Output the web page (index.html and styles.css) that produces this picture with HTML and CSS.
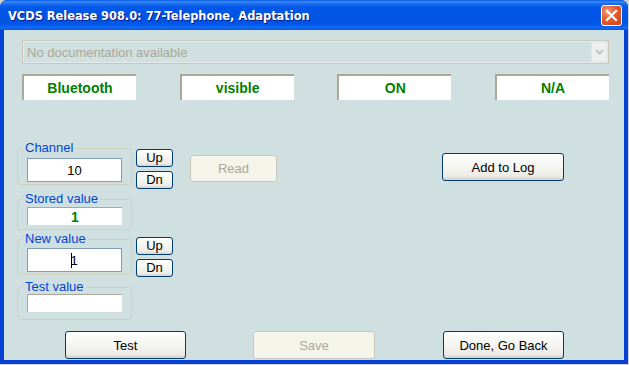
FILE: index.html
```html
<!DOCTYPE html>
<html>
<head>
<meta charset="utf-8">
<link rel="stylesheet" href="styles.css">
</head>
<body>
<div class="window">
  <div class="titlebar">
    <span class="title">VCDS Release 908.0: 77-Telephone, Adaptation</span>
    <span class="close">
      <svg width="13" height="13" viewBox="0 0 13 13"><path d="M2 2 L11 11 M11 2 L2 11" stroke="#fff" stroke-width="2.2" stroke-linecap="square"/></svg>
    </span>
  </div>
  <div class="client">
    <div class="combo">
      <span class="combo-text">No documentation available</span>
      <span class="combo-btn">
        <svg width="9" height="6" viewBox="0 0 9 6"><path d="M1 1 L4.5 4.5 L8 1" fill="none" stroke="#c3c7cb" stroke-width="2"/></svg>
      </span>
    </div>
    <div class="status">
      <div class="sbox">Bluetooth</div>
      <div class="sbox">visible</div>
      <div class="sbox">ON</div>
      <div class="sbox">N/A</div>
    </div>
    <div class="main">
      <div class="leftcol">
        <div class="grow">
          <fieldset class="grp g-channel"><legend>Channel</legend><div class="edit">10</div></fieldset>
          <div class="updn up1"><button class="btn small">Up</button><button class="btn small">Dn</button></div>
        </div>
        <fieldset class="grp g-stored"><legend>Stored value</legend><div class="ro green">1</div></fieldset>
        <div class="grow">
          <fieldset class="grp g-new"><legend>New value</legend><div class="edit"><span class="caret"></span>1</div></fieldset>
          <div class="updn up2"><button class="btn small">Up</button><button class="btn small">Dn</button></div>
        </div>
        <fieldset class="grp g-test"><legend>Test value</legend><div class="ro"></div></fieldset>
      </div>
      <button class="btn dis read">Read</button>
      <button class="btn addlog">Add to Log</button>
    </div>
    <div class="bottom">
      <button class="btn b-test">Test</button>
      <button class="btn dis b-save">Save</button>
      <button class="btn b-done">Done, Go Back</button>
    </div>
  </div>
</div>
</body>
</html>
```

FILE: styles.css
```css
* { box-sizing: border-box; }
html, body { margin: 0; padding: 0; }
body {
  width: 629px;
  height: 365px;
  background: #d6d3ce;
  font-family: "Liberation Sans", Arial, sans-serif;
  font-size: 13px;
  overflow: hidden;
}
.window {
  width: 628px;
  height: 364px;
  display: flex;
  flex-direction: column;
  border-radius: 7px 7px 0 0;
  overflow: hidden;
  background: #0842d4;
}
.titlebar {
  height: 30px;
  flex: none;
  display: flex;
  align-items: center;
  padding: 0 6px 0 8px;
  background: linear-gradient(to bottom, #0a5ce6 0%, #3b8cf6 7%, #1c6cf0 12%, #0058e9 25%, #0054e3 55%, #0055e6 78%, #0a64f2 88%, #1569f0 94%, #0a55e0 100%);
}
.title {
  color: #fff;
  font-family: "DejaVu Sans", sans-serif;
  font-weight: bold;
  font-size: 11.4px;
  text-shadow: 1px 1px 0 #0a1e8c;
  flex: 1;
  padding-top: 1px;
}
.close {
  width: 21px;
  height: 21px;
  border: 1px solid #fff;
  border-radius: 3px;
  background: radial-gradient(circle at 30% 30%, #f09a7c 0%, #e35b2f 45%, #c9431c 100%);
  display: flex;
  align-items: center;
  justify-content: center;
  margin-top: 1px;
}
.client {
  flex: 1;
  margin: 0 4px 4px 4px;
  background: #d0dfdf;
  display: flex;
  flex-direction: column;
  padding: 10px 15px 0 18px;
}
.combo {
  height: 24px;
  display: flex;
  align-items: center;
  border: 1px solid #c9c7ba;
  box-shadow: inset 0 0 0 1px #e4ebea;
  padding: 0 1px 0 4px;
}
.combo-text {
  flex: 1;
  color: #aca899;
  font-size: 13px;
}
.combo-btn {
  width: 16px;
  height: 20px;
  background: #eef0ef;
  border: 1px solid #e2e6e4;
  border-radius: 2px;
  display: flex;
  align-items: center;
  justify-content: center;
}
.status {
  margin-top: 10px;
  display: flex;
  justify-content: space-between;
}
.sbox {
  width: 114px;
  height: 26px;
  background: #fff;
  border-top: 2px solid #aca899;
  border-left: 2px solid #aca899;
  color: #008000;
  font-weight: bold;
  font-size: 14px;
  display: flex;
  align-items: center;
  justify-content: center;
}
.main {
  margin-top: 41px;
  margin-left: -5px;
  display: flex;
  align-items: flex-start;
}
.leftcol {
  display: flex;
  flex-direction: column;
}
.grow {
  display: flex;
  align-items: flex-start;
}
.grp {
  width: 115px;
  margin: 0;
  padding: 3px 8px 2px 9px;
  min-width: 0;
  border: 1px solid #d0d0bf;
  border-radius: 4px;
}
.grp legend {
  padding: 0 2px;
  margin-left: -4px;
  color: #0046d5;
  font-size: 13px;
  line-height: 14px;
}
.g-stored { margin-top: 3px; padding-top: 1px; padding-bottom: 4px; }
.g-new { margin-top: 2px; padding-top: 2px; }
.g-test { margin-top: 3px; padding-top: 0px; padding-bottom: 7px; }
.edit {
  width: 95px;
  height: 24px;
  background: #fff;
  border: 1px solid #7f9db9;
  display: flex;
  align-items: center;
  justify-content: center;
  color: #000;
  font-size: 13px;
}
.ro {
  width: 95px;
  height: 18px;
  background: #fff;
  border-top: 1px solid #aca899;
  border-left: 1px solid #aca899;
  display: flex;
  align-items: center;
  justify-content: center;
  font-size: 14px;
}
.green { color: #008000; font-weight: bold; }
.caret {
  display: inline-block;
  width: 1px;
  height: 15px;
  background: #000;
  margin-right: -2px;
}
.updn {
  display: flex;
  flex-direction: column;
  gap: 4px;
  margin-left: 4px;
}
.up1 { margin-top: 8px; }
.up2 { margin-top: 7px; }
.btn {
  font-family: "Liberation Sans", Arial, sans-serif;
  font-size: 13px;
  color: #000;
  border: 1px solid #003c74;
  border-radius: 3px;
  background: linear-gradient(to bottom, #ffffff 0%, #f4f4f0 50%, #ecebe6 85%, #d6d0c5 100%);
  padding: 0;
  height: 28px;
}
.btn.small { width: 37px; height: 18px; font-size: 13px; line-height: 14px; }
.btn.dis {
  color: #aca899;
  border-color: #c9c7ba;
  background: #f5f4ea;
}
.read { width: 87px; height: 27px; margin-left: 17px; margin-top: 14px; }
.addlog { width: 122px; margin-left: auto; margin-right: 45px; margin-top: 12px; }
.bottom {
  margin-top: 11px;
  margin-left: -18px;
  display: flex;
}
.b-test { width: 121px; margin-left: 61px; }
.b-save { width: 122px; margin-left: 67px; }
.b-done { width: 121px; margin-left: 68px; }
```
